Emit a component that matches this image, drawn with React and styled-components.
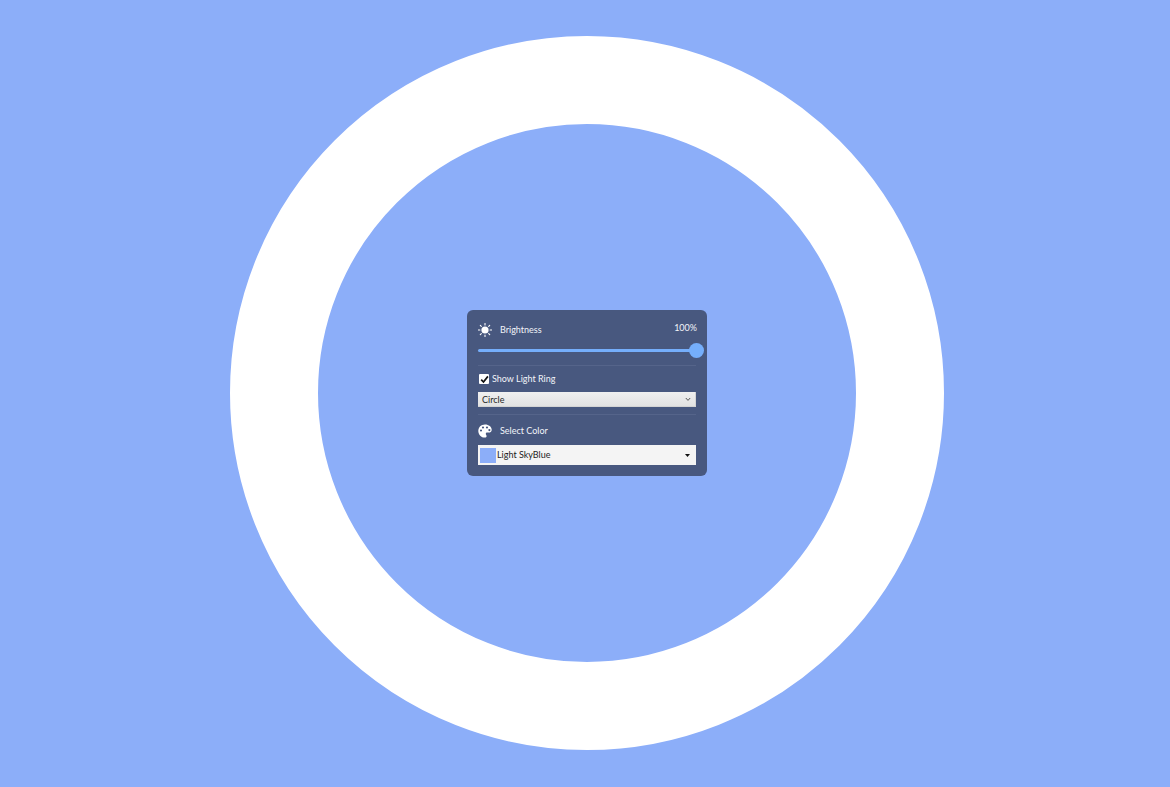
import React from "react";
import styled, { createGlobalStyle } from "styled-components";

const Global = createGlobalStyle`
  html, body { margin: 0; padding: 0; width: 100%; height: 100%; overflow: hidden; }
  body { background: #8caef9; font-family: "Lato", "Open Sans", "Liberation Sans", sans-serif; }
  #root { height: 100%; }
`;

const Stage = styled.main`
  width: 1170px;
  height: 787px;
  display: flex;
  align-items: center;
  justify-content: center;
  padding: 0 0 1px 4px;
  box-sizing: border-box;
  background: #8caef9;
`;

const Ring = styled.div`
  width: 714px;
  height: 714px;
  box-sizing: border-box;
  border: 88px solid #ffffff;
  border-radius: 50%;
  flex: none;
  display: flex;
  align-items: center;
  justify-content: center;
`;

const Panel = styled.section`
  width: 240px;
  height: 166px;
  box-sizing: border-box;
  padding: 11px 11px 0;
  flex: none;
  background: #48587f;
  border-radius: 6px;
  color: #f2f4f9;
  font-size: 9px;
  display: flex;
  flex-direction: column;
`;

const HeaderRow = styled.div`
  height: 18px;
  display: flex;
  align-items: center;
  gap: 8px;
`;

const Label = styled.span`
  flex: 1;
  line-height: 18px;
`;

const Percent = styled.span`
  line-height: 14px;
  align-self: flex-start;
  margin-right: -1px;
`;

const Slider = styled.div`
  margin-top: 4px;
  height: 15px;
  position: relative;
  display: flex;
  align-items: center;
`;

const Track = styled.div`
  flex: 1;
  height: 3px;
  border-radius: 2px;
  background: #75aefb;
`;

const Thumb = styled.div`
  position: absolute;
  right: -7.5px;
  top: 0;
  width: 15px;
  height: 15px;
  border-radius: 50%;
  background: #75aefb;
`;

const Divider = styled.hr`
  margin: 7px 0 0;
  height: 1px;
  border: 0;
  background: #55648a;
`;

const CheckRow = styled.label`
  margin-top: 8px;
  height: 10px;
  display: flex;
  align-items: center;
  gap: 3px;
  padding-left: 1px;
  line-height: 10px;
`;

const CheckBox = styled.span`
  width: 10px;
  height: 10px;
  flex: none;
  background: #ffffff;
  border-radius: 1px;
  display: flex;
  align-items: center;
  justify-content: center;
`;

const PlainSelect = styled.div`
  margin-top: 8px;
  height: 15px;
  box-sizing: border-box;
  padding: 0 4px;
  display: flex;
  align-items: center;
  justify-content: space-between;
  background: linear-gradient(#f0f0f0, #e2e2e2);
  border: 1px solid #d4d4d4;
  border-width: 0 1px 1px 0;
  color: #262626;
  line-height: 15px;
`;

const ColorHeader = styled(HeaderRow)`
  margin-top: 7px;
`;

const ColorSelect = styled.div`
  margin-top: 5px;
  height: 20px;
  box-sizing: border-box;
  padding: 0 6px 0 2px;
  display: flex;
  align-items: center;
  background: #f4f4f4;
  color: #1d1d1d;
  line-height: 20px;
`;

const Swatch = styled.span`
  width: 16px;
  height: 15px;
  flex: none;
  margin-right: 1px;
  background: #8caef9;
`;

const ColorName = styled.span`
  flex: 1;
`;

const Sun = () => (
  <svg width="14" height="14" viewBox="0 0 14 14" fill="none" stroke="#fff" strokeWidth="1.1" strokeLinecap="round" style={{ flex: "none" }}>
    <circle cx="7" cy="7" r="3.6" fill="#fff" stroke="none" />
    <path d="M7 .4v1.5M7 12.1v1.5M.4 7h1.5M12.1 7h1.5M2.3 2.3l1 1M10.7 10.7l1 1M2.3 11.7l1-1M10.7 3.3l1-1" />
  </svg>
);

const Palette = () => (
  <svg width="14" height="14" viewBox="0 0 14 14" style={{ flex: "none" }}>
    <path fill="#fff" fillRule="evenodd" d="M7 .4C3.2.4.3 3.2.3 6.9c0 3.7 3 6.7 6.5 6.7 1.1 0 1.8-.7 1.8-1.6 0-.5-.2-.8-.4-1.1-.2-.3-.4-.6-.4-1 0-.8.6-1.3 1.4-1.3h1.5c1.9 0 3-1.2 3-2.9C13.7 2.8 10.8.4 7 .4ZM3 7.6a1.1 1.1 0 1 1 0-2.2 1.1 1.1 0 0 1 0 2.2Zm2-3a1.1 1.1 0 1 1 0-2.2 1.1 1.1 0 0 1 0 2.2Zm4 0a1.1 1.1 0 1 1 0-2.2 1.1 1.1 0 0 1 0 2.2Zm2.4 2.6a1.1 1.1 0 1 1 0-2.2 1.1 1.1 0 0 1 0 2.2Z" />
  </svg>
);

const Tick = () => (
  <svg width="9" height="9" viewBox="0 0 9 9" fill="none" stroke="#111" strokeWidth="1.7">
    <path d="M1.2 4.6 3.5 7 7.9 1.4" />
  </svg>
);

const Chevron = () => (
  <svg width="6" height="5" viewBox="0 0 6 5" fill="none" stroke="#555" strokeWidth="1">
    <path d="M.8 1 3 3.4 5.2 1" />
  </svg>
);

const Caret = () => (
  <svg width="5" height="3" viewBox="0 0 5 3"><path d="M0 0h5L2.5 3Z" fill="#111" /></svg>
);

export default function App() {
  return (
    <>
      <Global />
      <Stage>
        <Ring>
          <Panel>
            <HeaderRow>
              <Sun />
              <Label>Brightness</Label>
              <Percent>100%</Percent>
            </HeaderRow>
            <Slider>
              <Track />
              <Thumb />
            </Slider>
            <Divider />
            <CheckRow>
              <CheckBox><Tick /></CheckBox>
              Show Light Ring
            </CheckRow>
            <PlainSelect>
              Circle
              <Chevron />
            </PlainSelect>
            <Divider />
            <ColorHeader>
              <Palette />
              <Label>Select Color</Label>
            </ColorHeader>
            <ColorSelect>
              <Swatch />
              <ColorName>Light SkyBlue</ColorName>
              <Caret />
            </ColorSelect>
          </Panel>
        </Ring>
      </Stage>
    </>
  );
}
